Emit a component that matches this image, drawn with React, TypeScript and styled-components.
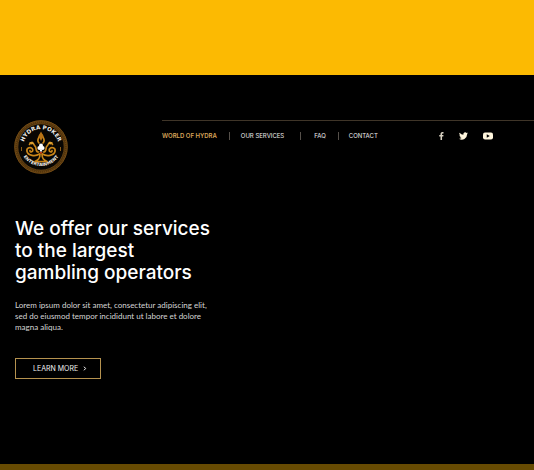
import React from "react";
import styled, { createGlobalStyle } from "styled-components";

const GlobalStyle = createGlobalStyle`
  * { box-sizing: border-box; }
  body {
    margin: 0;
    background: #000;
    color: #fff;
    font-family: Inter, "Open Sans", sans-serif;
  }
`;

const Page = styled.div`
  display: flex;
  flex-direction: column;
  min-height: 100vh;
`;

const Banner = styled.div`
  height: 75px;
  background: #fcba02;
`;

const Header = styled.header`
  display: grid;
  grid-template-columns: 148px 1fr;
  align-items: start;
  padding: 45px 0 0 14px;
`;

const HomeLink = styled.a`
  display: block;
  width: 54px;
  height: 54px;
  svg { display: block; }
`;

const Bar = styled.div`
  display: flex;
  justify-content: space-between;
  align-items: center;
  border-top: 1px solid #3f3528;
  padding: 11px 41px 0 0;
`;

const Nav = styled.nav`
  display: flex;
  align-items: center;
`;

const NavLink = styled.a<{ $active?: boolean; $before: number; $after: number }>`
  padding-left: ${(p) => p.$before}px;
  padding-right: ${(p) => p.$after}px;
  font-size: 6px;
  line-height: 8px;
  font-weight: ${(p) => (p.$active ? 600 : 400)};
  color: ${(p) => (p.$active ? "#d9a559" : "#ededed")};
  text-decoration: none;
  white-space: nowrap;
  & + & { border-left: 1px solid #55504a; }
`;

const Social = styled.div`
  display: flex;
  align-items: center;
  gap: 15px;
`;

const SocialLink = styled.a`
  display: block;
  color: #fff6dd;
  svg { display: block; }
`;

const Main = styled.main`
  flex: 1;
  padding: 44px 15px 84px;
`;

const Title = styled.h1`
  margin: 0;
  max-width: 210px;
  font-size: 19px;
  line-height: 22px;
  font-weight: 500;
`;

const Copy = styled.p`
  margin: 16px 0 25px;
  font-family: Lato, sans-serif;
  font-size: 8px;
  line-height: 11px;
  color: #d6d6d6;
`;

const Button = styled.button`
  display: flex;
  align-items: center;
  gap: 5px;
  height: 21px;
  padding: 0 13px 0 17px;
  border: 1px solid #b5924f;
  background: transparent;
  color: #f2f2f2;
  font-family: inherit;
  font-size: 7px;
  line-height: 8px;
`;

const Footer = styled.footer`
  height: 6px;
  background: #674b02;
`;

const Logo = () => (
  <svg width="54" height="54" viewBox="0 0 54 54" role="img" aria-label="Hydra Poker Entertainment">
    <defs>
      <path id="top-arc" d="M9.500 31a17.900 17.900 0 1 1 35 0" />
      <path id="bottom-arc" d="M6 25a21 21 0 1 0 42 0" />
    </defs>
    <circle cx="27" cy="27" r="25" fill="#080603" stroke="#50330c" strokeWidth="3.4" />
    <circle cx="27" cy="27" r="26.3" fill="none" stroke="#80551a" strokeWidth=".7" />
    <circle cx="27" cy="27" r="25" fill="none" stroke="#7b5118" strokeWidth="1" strokeDasharray="1 1" />
    <circle cx="27" cy="27" r="23.2" fill="none" stroke="#80551a" strokeWidth=".7" />
    <g fill="#f4f1ea" fontWeight="700" textAnchor="middle" fontFamily="DejaVu Sans, sans-serif">
      <text fontSize="5.6">
        <textPath href="#top-arc" startOffset="50%">HYDRA POKER</textPath>
      </text>
      <text fontSize="4.4">
        <textPath href="#bottom-arc" startOffset="50%">ENTERTAINMENT</textPath>
      </text>
    </g>
    <g fill="none" stroke="#c98519" strokeWidth="1.7" strokeLinecap="round">
      <path d="M25.5 34C21 37 14 35.500 13 31.500C12 27.500 17 26.500 18.500 29C20 32 15.500 33 16 30.500" />
      <path d="M28.500 34C33 37 40 35.500 41 31.500C42 27.500 37 26.500 35.500 29C34 32 38.500 33 38 30.500" />
      <path d="M24.500 32C20.500 32 23.500 27.500 20.500 25.500C19 22 16 22.500 15.500 24.500" />
      <path d="M29.500 32C33.500 32 30.500 27.500 33.500 25.500C35 22 38 22.500 38.500 24.500" />
      <path d="M25 23C22 20 25 18 26 15M29 23C32 20 29 18 28 15" />
      <path d="M26 34C26 39 24 40 21 41.500M28 34C28 39 30 40 33 41.500M22 41.500H32" />
    </g>
    <path d="M27 11.500l2.500 4.500-2.500 5-2.500-5z" fill="#b87315" />
    <path d="M15.300 22.500l3-1 2 2-3 1zM38.700 22.500l-3-1-2 2 3 1z" fill="#dda032" />
    <path d="M7.500 27v4M46.500 27v4" stroke="#8b5c19" strokeWidth="1" />
    <g fill="#fff">
      <circle cx="27" cy="25.500" r="2" />
      <circle cx="25.300" cy="28" r="1.900" />
      <circle cx="28.700" cy="28" r="1.900" />
      <path d="M26.600 27.500h.8l.8 4h-2.400z" />
    </g>
    <path d="M25.800 32l1.200 2.200 1.200-2.200z" fill="#e33d16" />
  </svg>
);

const Facebook = () => (
  <svg width="5" height="8" viewBox="0 0 10 16" fill="#d8d1c1" aria-hidden="true">
    <path d="M3 16V9H.5V6H3V4C3 1.400 4.500 0 6.900 0L9 .2v2.600H7.600C6.400 2.800 6.100 3.400 6.100 4.200V6H9l-.5 3H6.100v7z" />
  </svg>
);

const Twitter = () => (
  <svg width="9" height="8" viewBox="0 2 24 20" fill="currentColor" aria-hidden="true">
    <path d="M24 4.600a10 10 0 0 1-2.800.8A5 5 0 0 0 23.300 2.700a10 10 0 0 1-3.100 1.200 4.900 4.900 0 0 0-8.400 4.500A14 14 0 0 1 1.700 3.100a4.900 4.900 0 0 0 1.500 6.600 5 5 0 0 1-2.200-.6v.1a4.900 4.900 0 0 0 3.900 4.800 5 5 0 0 1-2.200.1 4.900 4.900 0 0 0 4.600 3.400A10 10 0 0 1 0 19.500 14 14 0 0 0 21.500 7.100 10 10 0 0 0 24 4.600z" />
  </svg>
);

const YouTube = () => (
  <svg width="10" height="8" viewBox="0 0 20 16" aria-hidden="true">
    <rect y="1" width="20" height="14" rx="4" fill="currentColor" />
    <path d="M7.500 4.500v7l6-3.500z" fill="#000" />
  </svg>
);

const Chevron = () => (
  <svg width="4" height="5" viewBox="0 0 4 5" fill="none" stroke="#fff" aria-hidden="true">
    <path d="M1 .7l1.600 1.800L1 4.300" />
  </svg>
);

export default function App() {
  return (
    <Page>
      <GlobalStyle />
      <Banner />
      <Header>
        <HomeLink href="#home"><Logo /></HomeLink>
        <Bar>
          <Nav aria-label="Main">
            <NavLink href="#world" $active $before={0} $after={12}>WORLD OF HYDRA</NavLink>
            <NavLink href="#services" $before={11} $after={16}>OUR SERVICES</NavLink>
            <NavLink href="#faq" $before={13} $after={12}>FAQ</NavLink>
            <NavLink href="#contact" $before={10} $after={0}>CONTACT</NavLink>
          </Nav>
          <Social>
            <SocialLink href="#facebook" aria-label="Facebook"><Facebook /></SocialLink>
            <SocialLink href="#twitter" aria-label="Twitter"><Twitter /></SocialLink>
            <SocialLink href="#youtube" aria-label="YouTube"><YouTube /></SocialLink>
          </Social>
        </Bar>
      </Header>
      <Main>
        <Title>We offer our services to the largest<br />gambling operators</Title>
        <Copy>
          Lorem ipsum dolor sit amet, consectetur adipiscing elit,<br />
          sed do eiusmod tempor incididunt ut labore et dolore<br />
          magna aliqua.
        </Copy>
        <Button type="button">LEARN MORE <Chevron /></Button>
      </Main>
      <Footer />
    </Page>
  );
}
